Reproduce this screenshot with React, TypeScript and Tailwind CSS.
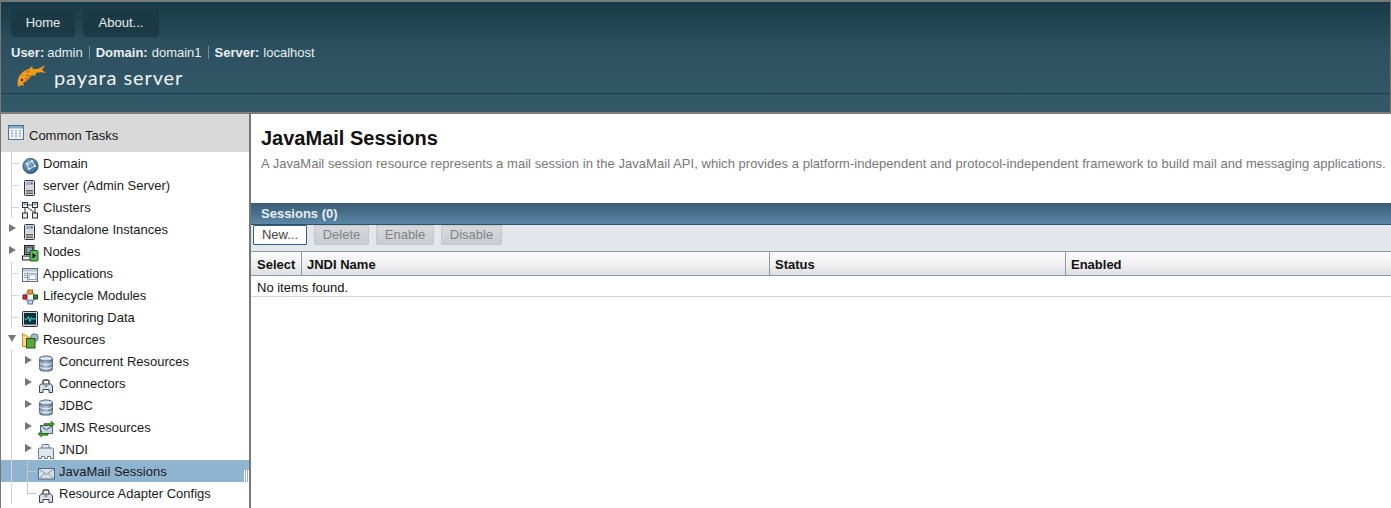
import React from "react";

type IconName = "globe" | "server" | "clusters" | "nodes" | "apps" | "lifecycle" | "monitor" | "resources" | "db" | "connector" | "jms" | "jndi" | "mail";

function Icon({ name }: { name: IconName }) {
  const common = { width: 18, height: 18, viewBox: "0 0 18 18", className: "block shrink-0 translate-y-[3px]" };
  switch (name) {
    case "globe":
      return (
        <svg {...common}>
          <defs><radialGradient id="g1" cx="40%" cy="35%" r="70%"><stop offset="0" stopColor="#8fb4d6" /><stop offset="1" stopColor="#2c5a88" /></radialGradient></defs>
          <circle cx="8.5" cy="9" r="7.6" fill="url(#g1)" stroke="#3b5f82" />
          <path d="M5 7l5-3 3 5-6 3z" fill="none" stroke="#d8e6f2" strokeWidth="1" />
          <circle cx="5" cy="7" r="1" fill="#fff" /><circle cx="10" cy="4" r="1" fill="#fff" /><circle cx="13" cy="9" r="1" fill="#fff" /><circle cx="7" cy="12" r="1" fill="#fff" />
        </svg>
      );
    case "server":
      return (
        <svg {...common}>
          <rect x="2.5" y="1.5" width="10" height="15" rx="1" fill="#d5d9dc" stroke="#333" />
          <rect x="4" y="3" width="7" height="3" fill="#9fb0bf" />
          <rect x="9" y="3.5" width="1.5" height="1.5" fill="#2f6fd0" />
          <path d="M4 11.5h7M4 13h7M4 14.5h7" stroke="#666" />
        </svg>
      );
    case "clusters":
      return (
        <svg {...common}>
          <g fill="#e8edf2" stroke="#333">
            <rect x="0.5" y="1.5" width="5" height="5" /><rect x="10.5" y="1.5" width="5" height="5" /><rect x="0.5" y="12" width="5" height="5" /><rect x="10.5" y="12" width="5" height="5" />
          </g>
          <rect x="1.5" y="2.5" width="3" height="1.5" fill="#5b8fd0" />
          <rect x="11.5" y="2.5" width="3" height="1.5" fill="#5b8fd0" />
          <path d="M5.5 4h5M3 6.5v5.5M5 6l8 6M13 6.5v5.5" stroke="#333" fill="none" />
        </svg>
      );
    case "nodes":
      return (
        <svg {...common}>
          <rect x="2.5" y="0.5" width="9.5" height="9" fill="#c9d2da" stroke="#222" />
          <rect x="4" y="2" width="6.5" height="6" fill="#8ea6bc" stroke="#333" />
          <rect x="0.5" y="11" width="11" height="4" fill="#e5e5ef" stroke="#222" />
          <rect x="8" y="5.5" width="8" height="10.5" rx="1" fill="#5db558" stroke="#1e5a1e" />
          <path d="M10.5 8v5.5l3.5-2.7z" fill="#111" />
        </svg>
      );
    case "apps":
      return (
        <svg {...common}>
          <rect x="0.5" y="1.5" width="15" height="13" fill="#eef1f4" stroke="#5c6f80" />
          <rect x="1" y="2" width="14" height="2.5" fill="#b9c6d2" />
          <path d="M5.5 5v9" stroke="#8b9baa" />
          <path d="M2 6.5h2.5M2 8.5h2.5M2 10.5h2.5" stroke="#8ba0b4" />
          <rect x="7" y="6.5" width="7" height="6" fill="#fff" stroke="#8ba0b4" />
          <rect x="7" y="6.5" width="7" height="2" fill="#b7c8d8" />
        </svg>
      );
    case "lifecycle":
      return (
        <svg {...common}>
          <circle cx="8" cy="8" r="5.5" fill="none" stroke="#8a949c" />
          <rect x="6" y="1" width="4.5" height="4" fill="#f0a020" stroke="#8a6a20" />
          <rect x="1" y="6" width="4" height="4" fill="#d62a2a" stroke="#6a1a1a" />
          <rect x="11.5" y="6" width="4" height="4" fill="#2e8a34" stroke="#1a4a1e" />
          <rect x="6" y="11" width="4.5" height="4" fill="#bcd4ec" stroke="#5a7a9a" />
        </svg>
      );
    case "monitor":
      return (
        <svg {...common}>
          <rect x="0.5" y="0.5" width="15" height="15" rx="1" fill="#cfd5da" stroke="#333" />
          <rect x="2" y="2" width="12" height="11.5" fill="#08323c" />
          <path d="M2.5 8h3l1-2.5 1.5 5 1.5-4 1 1.5h3" fill="none" stroke="#4fe0c8" strokeWidth="1" />
        </svg>
      );
    case "resources":
      return (
        <svg {...common}>
          <path d="M0.5 0.5l9 5v8h-9z" fill="#f3d98a" stroke="#c98f1d" />
          <circle cx="12.5" cy="4.5" r="3.7" fill="#a6b8c8" stroke="#5f7486" />
          <rect x="4.5" y="5.5" width="8.5" height="9.5" fill="#5aa83a" stroke="#23571a" />
        </svg>
      );
    case "db":
      return (
        <svg {...common}>
          <defs><linearGradient id="g2" x1="0" x2="1" y1="0" y2="0"><stop offset="0" stopColor="#6f8aa8" /><stop offset="0.5" stopColor="#b9c8d8" /><stop offset="1" stopColor="#5d7894" /></linearGradient></defs>
          <rect x="1.5" y="2" width="13" height="14" rx="3" fill="url(#g2)" stroke="#4f6478" />
          <ellipse cx="8" cy="3.5" rx="6.5" ry="2.5" fill="#d7e0e9" stroke="#4f6478" />
          <path d="M1.5 8c2 2.2 11 2.2 13 0M1.5 12c2 2.2 11 2.2 13 0" fill="none" stroke="#e6edf3" />
        </svg>
      );
    case "connector":
      return (
        <svg {...common}>
          <path d="M5 7V4.5A1.5 1.5 0 0 1 6.5 3h3A1.5 1.5 0 0 1 11 4.5V7" fill="none" stroke="#444" strokeWidth="1.4" />
          <path d="M1.5 15.5V8.5l2-1.5h9l2 1.5v7H11v-3H5v3z" fill="#d6dde4" stroke="#3c4854" />
          <rect x="6.5" y="8" width="3" height="2" fill="#8097ad" />
        </svg>
      );
    case "jms":
      return (
        <svg {...common}>
          <rect x="2.5" y="4.5" width="12" height="8" fill="#c7d4e0" stroke="#4f6478" />
          <path d="M2.5 4.5l6 4.5 6-4.5" fill="none" stroke="#4f6478" />
          <path d="M6 2.5h7V0l3.5 3L13 6V4.3H6z" fill="#3d9a2c" stroke="#1d5a14" strokeWidth="0.6" />
          <path d="M10 12.5H3.5V10L0 13l3.5 3v-1.7H10z" fill="#3d9a2c" stroke="#1d5a14" strokeWidth="0.6" />
        </svg>
      );
    case "jndi":
      return (
        <svg {...common}>
          <path d="M4 5V2.5A1 1 0 0 1 5 1.5h5a1 1 0 0 1 1 1V5" fill="#e0e8f0" stroke="#66788a" />
          <path d="M0.5 15.5V6.5A1.5 1.5 0 0 1 2 5h12a1.5 1.5 0 0 1 1.5 1.5v9h-3v-2h-3v2h-3v-2h-3v2z" fill="#dfe8f1" stroke="#66788a" />
        </svg>
      );
    case "mail":
      return (
        <svg {...common}>
          <rect x="0.5" y="3.5" width="16" height="10.5" fill="#d7dfe7" stroke="#5a6b7c" />
          <path d="M1 4l7.5 5.5L16 4M1 14l6-6M16 14l-6-6" fill="none" stroke="#8294a6" />
        </svg>
      );
    default:
      return null;
  }
}

function Arrow({ open }: { open?: boolean }) {
  return (
    <svg width="8" height="8" viewBox="0 0 8 8" className="block">
      {open ? <path d="M0 1h8L4 8z" fill="#777" /> : <path d="M1 0l7 4-7 4z" fill="#777" />}
    </svg>
  );
}

type Row = { label: string; icon: IconName; level: 0 | 1; arrow?: boolean; open?: boolean; selected?: boolean; last?: boolean };

const rows: Row[] = [
  { label: "Domain", icon: "globe", level: 0 },
  { label: "server (Admin Server)", icon: "server", level: 0 },
  { label: "Clusters", icon: "clusters", level: 0 },
  { label: "Standalone Instances", icon: "server", level: 0, arrow: true },
  { label: "Nodes", icon: "nodes", level: 0, arrow: true },
  { label: "Applications", icon: "apps", level: 0 },
  { label: "Lifecycle Modules", icon: "lifecycle", level: 0 },
  { label: "Monitoring Data", icon: "monitor", level: 0 },
  { label: "Resources", icon: "resources", level: 0, arrow: true, open: true },
  { label: "Concurrent Resources", icon: "db", level: 1, arrow: true },
  { label: "Connectors", icon: "connector", level: 1, arrow: true },
  { label: "JDBC", icon: "db", level: 1, arrow: true },
  { label: "JMS Resources", icon: "jms", level: 1, arrow: true },
  { label: "JNDI", icon: "jndi", level: 1, arrow: true },
  { label: "JavaMail Sessions", icon: "mail", level: 1, selected: true },
  { label: "Resource Adapter Configs", icon: "connector", level: 1, last: true },
];

function TreeRow({ r }: { r: Row }) {
  return (
    <div className={`relative flex h-[22px] items-center ${r.selected ? "bg-[#8fb4cf]" : ""}`}>
      {!(r.arrow && r.level === 0) && <span className="absolute left-[10px] top-0 h-[22px] w-px bg-[#d5d5d5]" />}
      {r.level === 0 && !r.arrow && <span className="absolute left-[10px] top-[11px] h-px w-[8px] bg-[#d5d5d5]" />}
      {r.level === 1 && !r.arrow && (
        <>
          <span className={`absolute left-[26px] top-0 w-px bg-[#c8c8c8] ${r.last ? "h-[11px]" : "h-[22px]"}`} />
          <span className="absolute left-[26px] top-[11px] h-px w-[9px] bg-[#c8c8c8]" />
        </>
      )}
      {r.arrow && (
        <span className={`absolute top-[6px] ${r.level === 0 ? "left-[7px]" : "left-[23px]"}`}>
          <Arrow open={r.open} />
        </span>
      )}
      <span className={`flex items-center gap-[3px] ${r.level === 0 ? "pl-[21px]" : "pl-[37px]"}`}>
        <Icon name={r.icon} />
        <span className="whitespace-nowrap text-[13px] leading-[15px] text-[#1a1a1a]">{r.label}</span>
      </span>
      {r.selected && (
        <span className="absolute right-0 top-[10px] flex gap-px">
          <span className="h-[15px] w-px bg-white" /><span className="h-[15px] w-px bg-white" /><span className="h-[15px] w-px bg-white" />
        </span>
      )}
    </div>
  );
}

function Sep() {
  return <span className="mx-[6px] inline-block h-[13px] w-px bg-[#6f8ea6]" />;
}

function Disabled({ label, className }: { label: string; className: string }) {
  return (
    <button className={`h-[20px] rounded-[1px] border border-[#c4c8cc] bg-gradient-to-b from-[#d7d9dc] to-[#c9ccd0] pb-[2px] text-[13px] leading-none text-[#808488] ${className}`}>
      {label}
    </button>
  );
}

export default function App() {
  return (
    <div className="flex h-[508px] w-[1391px] flex-col overflow-hidden bg-white font-['Liberation_Sans',Arial,sans-serif] text-[13px]">
      <header className="flex h-[114px] shrink-0 flex-col border-x border-t-[2px] border-b-[2px] border-x-[#777] border-t-[#777] border-b-[#807d78] bg-gradient-to-b from-[#173a46] via-[#2c505f] via-40% to-[#345969]">
        <nav className="flex gap-[8px] pl-[10px] pt-[7px]">
          <button className="h-[28px] w-[64px] rounded-[4px] bg-[#1b3a45] text-[13px] text-white/90">Home</button>
          <button className="h-[28px] w-[76px] rounded-[4px] bg-[#1b3a45] text-[13px] text-white/90">About...</button>
        </nav>
        <div className="mt-[8px] flex h-[15px] items-center pl-[10px] text-[13px] leading-[15px] text-[#e8eef2]">
          <b>User:</b><span className="ml-[3px]">admin</span><Sep />
          <b>Domain:</b><span className="ml-[4px]">domain1</span><Sep />
          <b>Server:</b><span className="ml-[4px]">localhost</span>
        </div>
        <div className="mt-[4px] flex h-[25px] items-center pl-[16px]">
          <svg width="29" height="23" viewBox="0 0 29 23" className="block shrink-0">
            <path d="M1 22c-1-6 0-10 3-13 2-3 5-4 8-5l3-3 1 3c3 0 5 0 7-1l5-3-3 5 4 3c-4-1-7-1-10 0l-1 3-3-1c-2 3-5 6-9 8l1 3-3-1z" fill="#f29a1e" />
            <path d="M8 7l5-2-1 3zM7 17l3-3 0 3z" fill="#c97408" />
            <circle cx="5" cy="15" r="1.3" fill="#5a3505" />
            <path d="M9 10l5 2M8 13l4 1" stroke="#a8640c" strokeWidth="1" />
          </svg>
          <span className="ml-[8px] whitespace-nowrap font-['Lato',sans-serif] text-[20px] leading-[22px] tracking-[0.9px] text-[#eef3f5]">payara server</span>
        </div>
        <div className="mt-[4px] h-px bg-[#1b3c49]" />
      </header>

      <div className="flex min-h-0 flex-1">
        <aside className="flex w-[251px] shrink-0 flex-col overflow-hidden border-x border-r-[2px] border-l-[#777] border-r-[#777]">
          <div className="flex h-[38px] shrink-0 items-center gap-[5px] bg-[#d9d9d9] pl-[7px] pt-[4px]">
            <svg width="16" height="15" viewBox="0 0 16 15" className="block -translate-y-[3px]">
              <rect x="0.5" y="0.5" width="15" height="14" fill="#eef2f6" stroke="#4e7393" />
              <rect x="1" y="1" width="14" height="2.5" fill="#87a9c7" />
              <path d="M3 6h2M7 6h2M11 6h2M3 8.5h2M7 8.5h2M11 8.5h2M3 11h2M7 11h2M11 11h2" stroke="#8296a8" />
            </svg>
            <span className="text-[13px] leading-[15px] text-[#1a1a1a]">Common Tasks</span>
          </div>
          <div>
            {rows.map((r) => <TreeRow key={r.label} r={r} />)}
          </div>
        </aside>

        <main className="flex min-w-0 flex-1 flex-col">
          <div className="h-[89px] shrink-0 pl-[10px] pt-[13px]">
            <h1 className="text-[20px] font-bold leading-[23px] text-[#111]">JavaMail Sessions</h1>
            <p className="mt-[6px] whitespace-nowrap text-[13px] leading-[15px] tracking-[0.044px] text-[#777]">
              A JavaMail session resource represents a mail session in the JavaMail API, which provides a platform-independent and protocol-independent framework to build mail and messaging applications.
            </p>
          </div>
          <div className="flex h-[22px] shrink-0 items-center border-b border-[#2f5266] bg-gradient-to-b from-[#395c72] to-[#5b87a8] pl-[10px] text-[13px] font-bold text-[#e6edf2]">
            Sessions (0)
          </div>
          <div className="flex h-[26px] shrink-0 items-start gap-[7px] bg-[#e3e6eb] pl-[2px]">
            <button className="h-[20px] w-[54px] rounded-[1px] border border-[#355f80] bg-white pb-[2px] text-[13px] leading-none text-[#444]">New...</button>
            <Disabled label="Delete" className="w-[55px]" />
            <Disabled label="Enable" className="w-[58px]" />
            <Disabled label="Disable" className="w-[61px]" />
          </div>
          <div className="grid h-[25px] shrink-0 grid-cols-[51px_468px_296px_1fr] border-y border-[#8b9ba3] bg-gradient-to-b from-[#fbfbfb] via-[#f1f1f2] to-[#dddfe1] text-[13px] font-bold text-[#111]">
            <div className="flex items-center border-r border-[#8b9ba3] pl-[6px] pt-[2px]">Select</div>
            <div className="flex items-center border-r border-[#8b9ba3] pl-[5px] pt-[2px]">JNDI Name</div>
            <div className="flex items-center border-r border-[#8b9ba3] pl-[5px] pt-[2px]">Status</div>
            <div className="flex items-center pl-[5px] pt-[2px]">Enabled</div>
          </div>
          <div className="flex h-[21px] shrink-0 items-center border-b border-[#d2d6d6] pl-[6px] pt-[3px] text-[13px] text-[#111]">No items found.</div>
        </main>
      </div>
    </div>
  );
}
